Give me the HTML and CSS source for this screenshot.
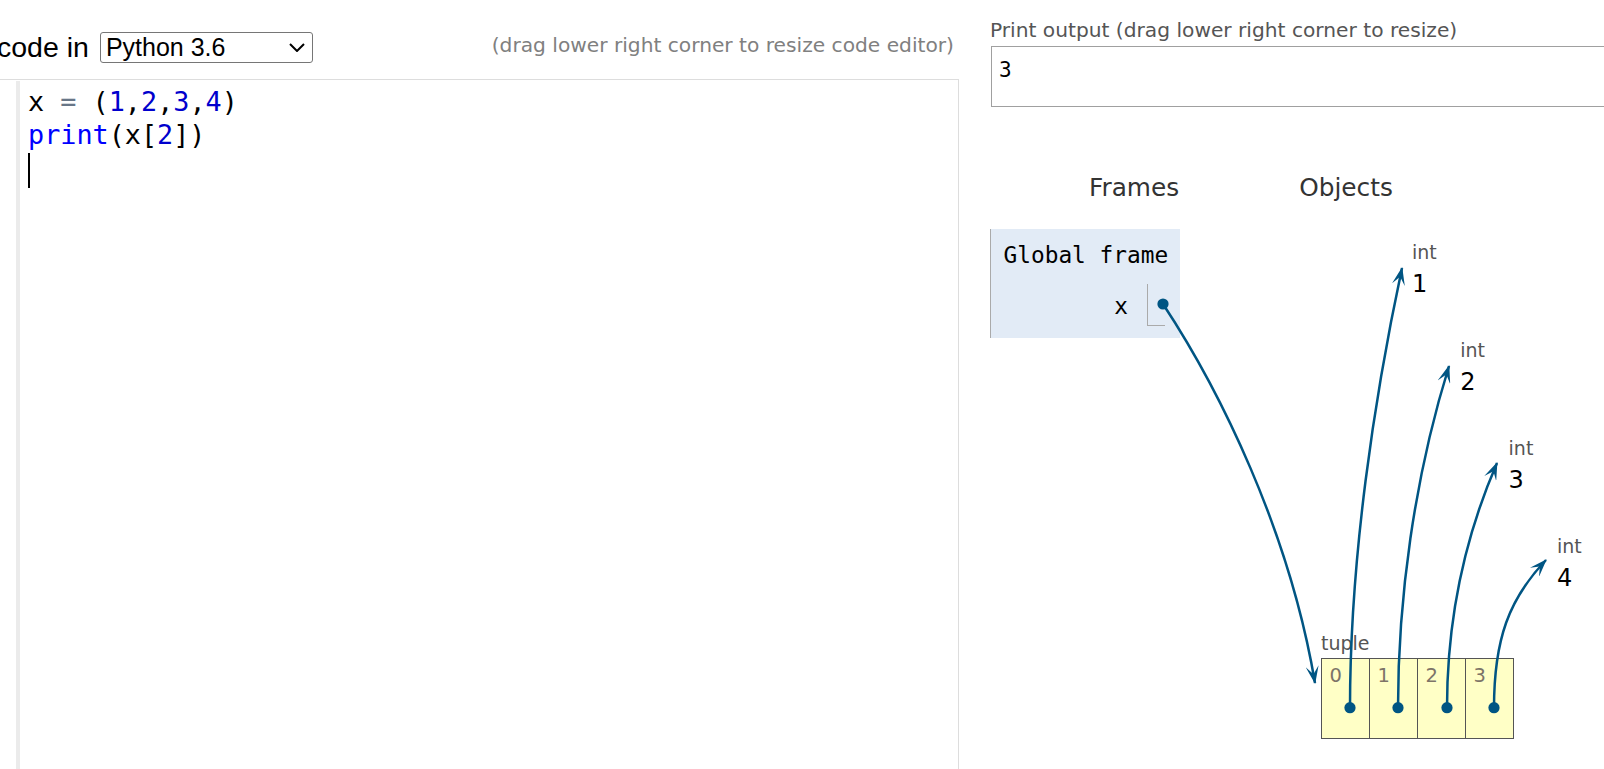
FILE: index.html
```html
<!DOCTYPE html>
<html>
<head>
<meta charset="utf-8">
<title>Python Tutor</title>
<link rel="stylesheet" href="styles.css">
</head>
<body>
<div class="page">
  <div class="left">
    <div class="topbar">
      <div class="lang">
        <span class="lang-label">code in</span>
        <div class="select">
          <span>Python 3.6</span>
          <svg class="chev" viewBox="0 0 16 9"><path d="M1,1 L8,8 L15,1" fill="none" stroke="#000" stroke-width="2"/></svg>
        </div>
      </div>
      <div class="hint">(drag lower right corner to resize code editor)</div>
    </div>
    <div class="editor">
      <div class="gutter"></div>
      <div class="code">
        <div class="line">x <span class="op">=</span> (<span class="num">1</span>,<span class="num">2</span>,<span class="num">3</span>,<span class="num">4</span>)</div>
        <div class="line"><span class="kw">print</span>(x[<span class="num">2</span>])</div>
        <div class="line"><div class="cursor"></div></div>
      </div>
    </div>
  </div>
  <div class="right">
    <div class="out-label">Print output (drag lower right corner to resize)</div>
    <div class="output">3</div>
    <div class="viz-head">
      <div class="hd-frames">Frames</div>
      <div class="hd-objects">Objects</div>
    </div>
    <div class="viz">
      <div class="frame">
        <div class="frame-title">Global frame</div>
        <div class="var-row">
          <div class="var-name">x</div>
          <div class="ptr"></div>
        </div>
      </div>

      <div class="heap-int n1"><div class="type">int</div><div class="val">1</div></div>
      <div class="heap-int n2"><div class="type">int</div><div class="val">2</div></div>
      <div class="heap-int n3"><div class="type">int</div><div class="val">3</div></div>
      <div class="heap-int n4"><div class="type">int</div><div class="val">4</div></div>

      <div class="heap-tuple">
        <div class="type">tuple</div>
        <div class="tuple-box">
          <div class="cell">0</div>
          <div class="cell">1</div>
          <div class="cell">2</div>
          <div class="cell">3</div>
        </div>
      </div>

      <svg class="arrows" width="615" height="540" viewBox="0 0 615 540">
        <defs>
          <marker id="ah" viewBox="0 0 18 13" refX="17" refY="6.5" markerWidth="18" markerHeight="13" markerUnits="userSpaceOnUse" orient="auto">
            <path d="M0,0 L18,6.5 L0,13 L8,6.5 Z" fill="#005583"/>
          </marker>
        </defs>
        <g fill="none" stroke="#005583" stroke-width="2.5" marker-end="url(#ah)">
          <path d="M174,75 C230,160 300,300 326,454"/>
          <path d="M361,479 C361,330 385,170 413,39"/>
          <path d="M409,479 C409,370 425,250 460,137"/>
          <path d="M458,479 C458,390 475,310 508,234"/>
          <path d="M505,479 C505,410 520,370 557,331"/>
        </g>
        <g fill="#005583">
          <circle cx="174" cy="75" r="5.6"/>
          <circle cx="361" cy="478.7" r="5.6"/>
          <circle cx="409" cy="478.7" r="5.6"/>
          <circle cx="458" cy="478.7" r="5.6"/>
          <circle cx="505" cy="478.7" r="5.6"/>
        </g>
      </svg>
    </div>
  </div>
</div>
</body>
</html>
```

FILE: styles.css
```css
* { box-sizing: border-box; }
html, body { margin: 0; padding: 0; }
body {
  width: 1604px;
  height: 769px;
  overflow: hidden;
  background: #fff;
  color: #000;
  font-family: "DejaVu Sans", Verdana, sans-serif;
}
.page { display: flex; height: 769px; }

/* left column */
.left { width: 959px; flex: none; display: flex; flex-direction: column; }
.topbar { height: 79px; display: flex; justify-content: space-between; align-items: flex-start; }
.lang { display: flex; align-items: center; margin-top: 32px; margin-left: -3px; }
.lang-label {
  font-family: "Liberation Sans", Arial, sans-serif;
  font-size: 28.5px;
  line-height: 31px;
  margin-right: 11px;
}
.select {
  width: 213px;
  height: 31px;
  border: 1px solid #767676;
  border-radius: 3px;
  display: flex;
  align-items: center;
  justify-content: space-between;
  padding: 0 7px 0 5px;
  font-family: "Liberation Sans", Arial, sans-serif;
  font-size: 25px;
  line-height: 29px;
  background: #fff;
}
.chev { width: 16px; height: 9px; display: block; }
.hint {
  margin-top: 33px;
  padding-right: 5px;
  font-size: 20.2px;
  line-height: 24px;
  color: #808080;
  white-space: nowrap;
}
.editor {
  flex: 1;
  display: flex;
  border-top: 1px solid #ddd;
  border-right: 1px solid #ddd;
  background: #fff;
}
.gutter { width: 4px; margin-left: 16px; margin-top: 1px; background: #ebebeb; }
.code {
  padding: 5px 0 0 8px;
  font-family: "DejaVu Sans Mono", monospace;
  font-size: 26.8px;
  line-height: 33.4px;
}
.line { height: 33.4px; white-space: pre; }
.op { color: #687687; }
.num { color: #0000cd; }
.kw { color: #0000ff; }
.cursor { width: 2px; height: 35px; margin-top: 1.6px; background: #000; }

/* right column */
.right { flex: none; width: 645px; margin-left: 30px; }
.out-label {
  margin-top: 18px;
  margin-left: 1px;
  font-size: 20.2px;
  line-height: 24px;
  color: #555;
  white-space: nowrap;
}
.output {
  margin-top: 4px;
  margin-left: 2px;
  height: 61px;
  border: 1px solid #a0a0a0;
  padding: 11px 0 0 7px;
  font-family: "DejaVu Sans Mono", monospace;
  font-size: 21px;
  line-height: 24px;
}
.viz-head {
  display: flex;
  margin-top: 65.5px;
  font-size: 24.8px;
  line-height: 30px;
  color: #333;
}
.hd-frames { margin-left: 100px; }
.hd-objects { margin-left: 120px; }
.viz { position: relative; margin-top: 26.5px; height: 540px; }

.frame {
  margin-left: 1px;
  width: 190px;
  height: 108.5px;
  background: #e2ebf6;
  border-left: 1px solid #aaa;
  padding: 12px 0 0 12.5px;
}
.frame-title {
  font-family: "DejaVu Sans Mono", monospace;
  font-size: 22.8px;
  line-height: 28px;
}
.var-row { display: flex; justify-content: flex-end; align-items: flex-start; margin-top: 15px; padding-right: 15px; }
.var-name {
  font-family: "DejaVu Sans Mono", monospace;
  font-size: 22.8px;
  line-height: 28px;
  margin-top: 8px;
  margin-right: 19px;
}
.ptr { width: 18px; height: 42px; border-left: 1px solid #aaa; border-bottom: 1px solid #aaa; }

.heap-int { position: absolute; }
.n1 { left: 423px; top: 12.4px; }
.n2 { left: 471.3px; top: 110.1px; }
.n3 { left: 519.6px; top: 207.8px; }
.n4 { left: 567.9px; top: 305.5px; }
.type { font-size: 19px; line-height: 22px; color: #555; }
.val { font-size: 24px; line-height: 30px; margin-top: 6px; color: #000; }

.heap-tuple { position: absolute; left: 332px; top: 403.4px; }
.tuple-box {
  display: flex;
  margin-top: 3.6px;
  height: 81px;
  border: 1px solid #555;
  background: #ffffc6;
}
.cell {
  width: 47px;
  padding: 6px 0 0 7.5px;
  font-size: 19.5px;
  line-height: 22px;
  color: #7d7468;
}
.cell + .cell { width: 48px; border-left: 1px solid #555; }

.arrows { position: absolute; left: 0; top: 0; overflow: visible; pointer-events: none; }
```
